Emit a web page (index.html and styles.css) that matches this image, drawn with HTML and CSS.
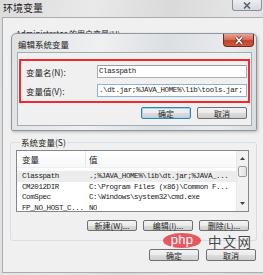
FILE: index.html
```html
<!DOCTYPE html>
<html>
<head>
<meta charset="utf-8">
<link rel="stylesheet" href="styles.css">
</head>
<body>
<div class="win">
  <div class="win-title">
    <span class="win-title-text">环境变量</span>
    <div class="close-outer">
      <svg width="10" height="7" viewBox="0 0 10 7"><path d="M2 0.5 L8 6.5 M8 0.5 L2 6.5" stroke="#5a6470" stroke-width="1.6" fill="none"/></svg>
    </div>
  </div>
  <div class="win-body">
    <div class="user-area">
      <div class="user-label">Administrator 的用户变量(U)</div>
    </div>
    <fieldset class="group">
      <legend>系统变量(S)</legend>
      <div class="list">
        <div class="list-main">
          <div class="list-head">
            <div class="col1">变量</div>
            <div class="col2">值</div>
          </div>
          <div class="row sel"><div class="col1 mono">Classpath</div><div class="col2 mono">.;%JAVA_HOME%\lib\dt.jar;%JAVA_...</div></div>
          <div class="row"><div class="col1 mono">CM2012DIR</div><div class="col2 mono">C:\Program Files (x86)\Common F...</div></div>
          <div class="row"><div class="col1 mono">ComSpec</div><div class="col2 mono">C:\Windows\system32\cmd.exe</div></div>
          <div class="row"><div class="col1 mono">FP_NO_HOST_C...</div><div class="col2 mono">NO</div></div>
        </div>
        <div class="scrollbar">
          <div class="sb-arrow"><svg width="7" height="5" viewBox="0 0 7 5"><path d="M1 4 L3.5 1 L6 4 Z" fill="#444"/></svg></div>
          <div class="sb-thumb"></div>
          <div class="sb-track"></div>
          <div class="sb-arrow"><svg width="7" height="5" viewBox="0 0 7 5"><path d="M1 1 L3.5 4 L6 1 Z" fill="#444"/></svg></div>
        </div>
      </div>
      <div class="btn-row">
        <div class="btn">新建(W)...</div>
        <div class="btn">编辑(I)...</div>
        <div class="btn">删除(L)...</div>
      </div>
    </fieldset>
    <div class="bottom-row">
      <div class="btn btn-b">确定</div>
      <div class="btn btn-b">取消</div>
    </div>
  </div>
</div>

<div class="dialog">
  <div class="dlg-title">
    <span class="dlg-title-text">编辑系统变量</span>
    <div class="close-red">
      <svg width="12" height="9" viewBox="0 0 12 9"><path d="M3 1 L9 8 M9 1 L3 8" stroke="#6b2a20" stroke-width="3" fill="none"/><path d="M3 1 L9 8 M9 1 L3 8" stroke="#ffffff" stroke-width="1.6" fill="none"/></svg>
    </div>
  </div>
  <div class="dlg-body">
    <div class="redbox">
      <div class="field">
        <span class="flabel">变量名(N):</span>
        <div class="input mono">Classpath</div>
      </div>
      <div class="field">
        <span class="flabel">变量值(V):</span>
        <div class="input input-focus mono">.\dt.jar;%JAVA_HOME%\lib\tools.jar;</div>
      </div>
    </div>
    <div class="dlg-btns">
      <div class="btn btn-d btn-default">确定</div>
      <div class="btn btn-d">取消</div>
    </div>
  </div>
</div>

<div class="watermark">
  <div class="php">php</div>
  <div class="cn">中文网</div>
</div>
</body>
</html>
```

FILE: styles.css
```css
* { box-sizing: border-box; }
html, body {
  margin: 0;
  padding: 0;
  width: 263px;
  height: 275px;
  overflow: hidden;
  background: #f0f0f0;
  font-family: "Noto Sans CJK SC", "Liberation Sans", sans-serif;
  color: #1e1e1e;
}
.mono {
  font-family: "Liberation Mono", "Noto Sans CJK SC", monospace;
  font-size: 7.5px;
  letter-spacing: -0.4px;
}
.win {
  position: relative;
  width: 263px;
  height: 275px;
  background: linear-gradient(100deg, #dcdcdc 0%, #e9e9e9 30%, #dadada 55%, #e6e6e6 80%, #d8d8d8 100%);
  display: flex;
  flex-direction: column;
  padding: 0 0 2px 2px;
}
.win-title {
  height: 17px;
  display: flex;
  align-items: flex-start;
  justify-content: space-between;
  flex: none;
}
.win-title-text {
  font-size: 10px;
  line-height: 12px;
  margin: 2px 0 0 1px;
  color: #222;
}
.close-outer {
  width: 30px;
  height: 11px;
  margin-right: 1px;
  border: 1px solid #8b8f96;
  border-top: none;
  border-radius: 0 0 3px 3px;
  background: linear-gradient(#eceef0, #d6d9dd);
  display: flex;
  align-items: center;
  justify-content: center;
}
.win-body {
  flex: 1;
  background: #f0f0f0;
  border-top: 1px solid #a9adb3;
  border-left: 1px solid #a9adb3;
  border-bottom: 1px solid #a9adb3;
  display: flex;
  flex-direction: column;
  padding: 0 6px 0 7px;
}
.user-area {
  height: 119px;
  flex: none;
}
.user-label {
  font-size: 8px;
  line-height: 10px;
  margin: 11px 0 0 6px;
  color: #222;
}
.group {
  margin: 0;
  padding: 0 7px 9px 5px;
  border: 1px solid #d5dfe5;
  border-radius: 3px;
  min-width: 0;
}
.group legend {
  font-size: 8.5px;
  line-height: 10px;
  padding: 0 1px;
  margin-left: 4px;
  color: #222;
}
.list {
  margin-top: 3px;
  height: 62px;
  border: 1px solid #828790;
  background: #fff;
  display: flex;
  overflow: hidden;
}
.list-main {
  flex: 1;
  min-width: 0;
  overflow: hidden;
}
.list-head {
  height: 17px;
  display: flex;
  align-items: center;
  font-size: 8.5px;
  background: linear-gradient(#ffffff, #f7f8f9);
  border-bottom: 1px solid #eef0f3;
  margin-bottom: 3px;
}
.list-head .col1 {
  border-right: 1px solid #e3e6ea;
  height: 100%;
  display: flex;
  align-items: center;
}
.col1 {
  width: 69px;
  padding-left: 5px;
  flex: none;
  white-space: nowrap;
  overflow: hidden;
}
.col2 {
  padding-left: 3px;
  white-space: nowrap;
  overflow: hidden;
}
.row {
  height: 10.5px;
  line-height: 10.5px;
  display: flex;
  color: #1a1a1a;
}
.row.sel { background: #ececec; }
.scrollbar {
  width: 12px;
  flex: none;
  display: flex;
  flex-direction: column;
  background: #f1f1f1;
  border-left: 1px solid #e8e8e8;
}
.sb-arrow {
  height: 15px;
  display: flex;
  align-items: center;
  justify-content: center;
  flex: none;
}
.sb-thumb {
  height: 11px;
  margin: 0 1px;
  border: 1px solid #9a9a9a;
  border-radius: 2px;
  background: linear-gradient(90deg, #f3f3f3, #e2e2e2);
  flex: none;
}
.sb-track { flex: 1; }
.btn-row {
  display: flex;
  justify-content: flex-end;
  gap: 6px;
  margin-top: 8px;
}
.btn {
  height: 11px;
  width: 50px;
  border: 1px solid #707070;
  border-radius: 2px;
  background: linear-gradient(#f3f3f3 0%, #ebebeb 50%, #dddddd 51%, #cfcfcf 100%);
  font-size: 8px;
  line-height: 9px;
  display: flex;
  align-items: center;
  justify-content: center;
  white-space: nowrap;
  color: #1e1e1e;
}
.bottom-row {
  display: flex;
  justify-content: flex-end;
  gap: 7px;
  margin-top: 8px;
  margin-right: 1px;
}
.btn-b { height: 12px; }

.dialog {
  position: absolute;
  left: 11px;
  top: 33px;
  width: 246px;
  height: 98px;
  border: 1px solid #8e97a2;
  border-radius: 5px 5px 2px 2px;
  background: linear-gradient(100deg, #dfe1e3 0%, #eef0f1 35%, #dcdfe2 60%, #e9ebec 85%, #dadde0 100%);
  display: flex;
  flex-direction: column;
  padding: 0 4px 4px 5px;
  box-shadow: 1px 1px 3px rgba(0,0,0,0.25);
}
.dlg-title {
  height: 18px;
  flex: none;
  display: flex;
  justify-content: space-between;
  align-items: flex-start;
}
.dlg-title-text {
  font-size: 8.5px;
  line-height: 10px;
  margin: 5px 0 0 1px;
  color: #222;
}
.close-red {
  width: 31px;
  height: 13px;
  margin: 0 -2px 0 0;
  border: 1px solid #6e2a22;
  border-top: none;
  border-radius: 0 0 4px 4px;
  background: linear-gradient(#e9a394 0%, #d5705d 45%, #c2412c 55%, #d0583e 100%);
  display: flex;
  align-items: center;
  justify-content: center;
}
.dlg-body {
  flex: 1;
  background: #f0f0f0;
  border: 1px solid #a3abb4;
  display: flex;
  flex-direction: column;
  padding: 6px 1px 0 1px;
}
.redbox {
  border: 2px solid #ee2a2f;
  padding: 4px 1px 4px 5px;
  display: flex;
  flex-direction: column;
  gap: 6px;
}
.field {
  display: flex;
  align-items: center;
  height: 13px;
}
.flabel {
  width: 71px;
  flex: none;
  font-size: 8.5px;
  color: #1e1e1e;
  white-space: nowrap;
}
.input {
  flex: 1;
  height: 13px;
  border: 1px solid #abadb3;
  border-top-color: #9a9da4;
  background: #fff;
  line-height: 11px;
  padding-left: 1px;
  white-space: nowrap;
  overflow: hidden;
}
.input-focus { border-color: #8fb2d4; }
.dlg-btns {
  display: flex;
  justify-content: flex-end;
  gap: 6px;
  margin-top: 4px;
  margin-right: 3px;
}
.btn-d { height: 12px; }
.btn-default {
  border-color: #3c7fb1;
  box-shadow: inset 0 0 0 1px #9fd6f5;
}

.watermark {
  position: absolute;
  left: 163px;
  top: 233px;
  height: 15px;
  display: flex;
  align-items: center;
  gap: 7px;
  pointer-events: none;
}
.php {
  width: 38px;
  height: 15px;
  border-radius: 50%;
  background: rgba(226, 64, 70, 0.85);
  color: #fff;
  font-family: "Liberation Sans", sans-serif;
  font-size: 13px;
  line-height: 14px;
  text-align: center;
  letter-spacing: 0.3px;
}
.cn {
  font-size: 13.5px;
  line-height: 14px;
  height: 14px;
  color: rgba(40, 40, 40, 0.85);
  letter-spacing: 1.2px;
}
```
